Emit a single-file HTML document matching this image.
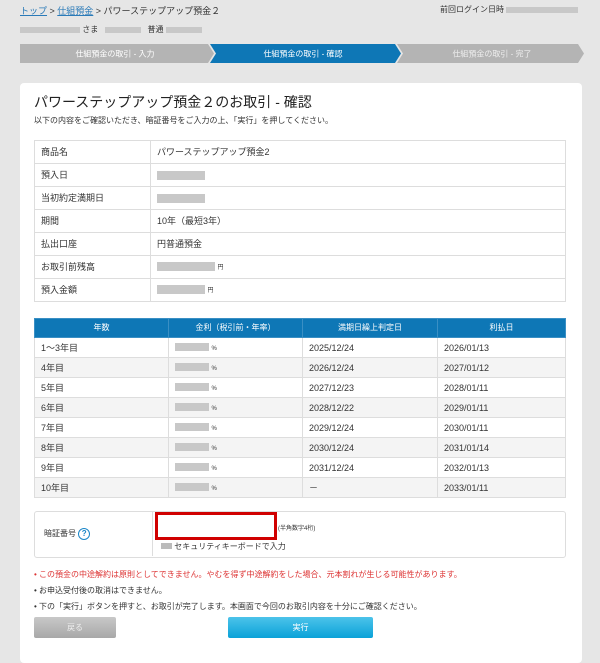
<html><head><style>
body{margin:0;width:600px;height:645px;background:#e6e6e6;font-family:"Liberation Sans","Noto Sans CJK JP",sans-serif;font-size:9px;color:#333;position:relative;overflow:hidden}
.a{position:absolute}
.blur{display:inline-block;background:#c8c8c8;height:9px;vertical-align:middle}
table{border-collapse:collapse;position:absolute;left:34px;width:532px;font-size:9px}
td{border:1px solid #ddd;height:23px;padding:0 0 0 6px;box-sizing:border-box;line-height:10px}
.rt td{height:20px;padding-top:0;padding-bottom:0}
.rt .blur{height:8px}
.rt tr:nth-child(odd) td{background:#f4f4f4}
.rt th{background:#0e77b6;color:#fff;font-weight:normal;height:19px;border:1px solid #3a8fc4;font-size:8px;padding:0;line-height:10px}
</style></head><body>
<div class="a" style="left:20px;top:4px"><span style="color:#2a7ab8;text-decoration:underline">トップ</span> &gt; <span style="color:#2a7ab8;text-decoration:underline">仕組預金</span> &gt; パワーステップアップ預金２</div>
<div class="a" style="left:440px;top:4px;font-size:8px">前回ログイン日時 <span class="blur" style="width:72px;height:6px"></span></div>
<div class="a" style="left:20px;top:24px;font-size:8px"><span class="blur" style="width:60px;height:6px"></span> さま &nbsp; <span class="blur" style="width:36px;height:6px"></span> &nbsp; 普通 <span class="blur" style="width:36px;height:6px"></span></div>
<svg class="a" style="left:20px;top:44px" width="564" height="19">
<polygon points="0,0 188,0 194,9.5 188,19 0,19" fill="#b4b4b4"/>
<polygon points="190,0 375,0 381,9.5 375,19 190,19 196,9.5" fill="#0e77b6"/>
<polygon points="377,0 558,0 564,9.5 558,19 377,19 383,9.5" fill="#b4b4b4"/>
<text x="95" y="12.5" fill="#fff" font-size="8" text-anchor="middle">仕組預金の取引 - 入力</text>
<text x="283" y="12.5" fill="#fff" font-size="8" text-anchor="middle">仕組預金の取引 - 確認</text>
<text x="472" y="12.5" fill="#eee" font-size="8" text-anchor="middle">仕組預金の取引 - 完了</text>
</svg>
<div class="a" style="left:20px;top:83px;width:562px;height:580px;background:#fff;border-radius:4px"></div>
<div class="a" style="left:34px;top:92px;font-size:14px;color:#222">パワーステップアップ預金２のお取引 - 確認</div>
<div class="a" style="left:34px;top:115px;font-size:8px">以下の内容をご確認いただき、暗証番号をご入力の上、「実行」を押してください。</div>
<table style="top:140px">
<tr><td style="width:116px">商品名</td><td>パワーステップアップ預金2</td></tr>
<tr><td>預入日</td><td><span class="blur" style="width:48px"></span></td></tr>
<tr><td>当初約定満期日</td><td><span class="blur" style="width:48px"></span></td></tr>
<tr><td>期間</td><td>10年（最短3年）</td></tr>
<tr><td>払出口座</td><td>円普通預金</td></tr>
<tr><td>お取引前残高</td><td><span class="blur" style="width:58px"></span> <span style="font-size:6px">円</span></td></tr>
<tr><td>預入金額</td><td><span class="blur" style="width:48px"></span> <span style="font-size:6px">円</span></td></tr>
</table>
<table class="rt" style="top:318px">
<tr><th style="width:133px">年数</th><th style="width:133px">金利（税引前・年率）</th><th style="width:134px">満期日繰上判定日</th><th>利払日</th></tr>
<tr><td>1～3年目</td><td><span class="blur" style="width:34px"></span> <span style="font-size:6px">%</span></td><td>2025/12/24</td><td>2026/01/13</td></tr>
<tr><td>4年目</td><td><span class="blur" style="width:34px"></span> <span style="font-size:6px">%</span></td><td>2026/12/24</td><td>2027/01/12</td></tr>
<tr><td>5年目</td><td><span class="blur" style="width:34px"></span> <span style="font-size:6px">%</span></td><td>2027/12/23</td><td>2028/01/11</td></tr>
<tr><td>6年目</td><td><span class="blur" style="width:34px"></span> <span style="font-size:6px">%</span></td><td>2028/12/22</td><td>2029/01/11</td></tr>
<tr><td>7年目</td><td><span class="blur" style="width:34px"></span> <span style="font-size:6px">%</span></td><td>2029/12/24</td><td>2030/01/11</td></tr>
<tr><td>8年目</td><td><span class="blur" style="width:34px"></span> <span style="font-size:6px">%</span></td><td>2030/12/24</td><td>2031/01/14</td></tr>
<tr><td>9年目</td><td><span class="blur" style="width:34px"></span> <span style="font-size:6px">%</span></td><td>2031/12/24</td><td>2032/01/13</td></tr>
<tr><td>10年目</td><td><span class="blur" style="width:34px"></span> <span style="font-size:6px">%</span></td><td>－</td><td>2033/01/11</td></tr>
</table>
<div class="a" style="left:34px;top:511px;width:530px;height:45px;border:1px solid #ddd;border-radius:3px"></div>
<div class="a" style="left:152px;top:512px;width:1px;height:44px;background:#ddd"></div>
<div class="a" style="left:44px;top:528px;font-size:8px">暗証番号 <span style="display:inline-block;width:10px;height:10px;border:1.3px solid #1a86c8;border-radius:50%;color:#1a86c8;font-size:8px;text-align:center;line-height:10px;font-weight:bold">?</span></div>
<div class="a" style="left:155px;top:512px;width:116px;height:22px;border:3px solid #d00000;background:#fff"></div>
<div class="a" style="left:278px;top:523px;font-size:6px">(半角数字4桁)</div>
<div class="a" style="left:161px;top:541px;font-size:8px"><span style="display:inline-block;width:11px;height:6px;background:#bbb"></span> セキュリティキーボードで入力</div>
<div class="a" style="left:34px;top:567px;font-size:8px;line-height:16px">
<div style="color:#d33">• この預金の中途解約は原則としてできません。やむを得ず中途解約をした場合、元本割れが生じる可能性があります。</div>
<div>• お申込受付後の取消はできません。</div>
<div>• 下の「実行」ボタンを押すと、お取引が完了します。本画面で今回のお取引内容を十分にご確認ください。</div></div>
<div class="a" style="left:34px;top:617px;width:82px;height:21px;background:linear-gradient(#c8c8c8,#a8a8a8);border-radius:2px;color:#eee;text-align:center;line-height:21px;font-size:8px">戻る</div>
<div class="a" style="left:228px;top:617px;width:145px;height:21px;background:linear-gradient(#4cc3ea,#0aa2d8);border-radius:2px;color:#fff;text-align:center;line-height:21px;font-size:8px">実行</div>
</body></html>
